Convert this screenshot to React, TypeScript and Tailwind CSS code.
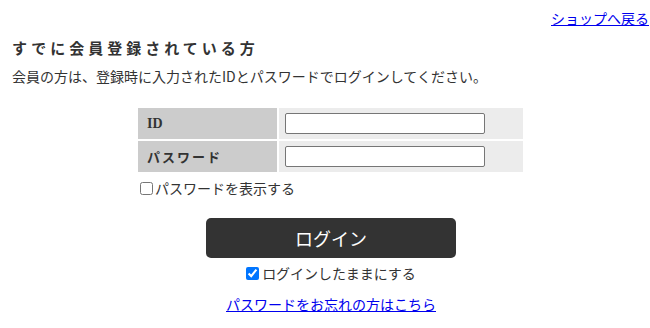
const FONT = "font-['Meiryo','Noto_Sans_CJK_JP',sans-serif]";

export default function App() {
  return (
    <div className={`w-[650px] h-[328px] bg-white text-[#333] text-[14px] ${FONT}`}>
      <div className="flex justify-end pt-[8px] pr-[1px] leading-[20px]">
        <a href="#" className="text-[#0000ee] underline text-[14px]">
          ショップへ戻る
        </a>
      </div>
      <div className="pl-[12px]">
        <h2 className="mt-[10px] font-bold text-[15px] tracking-[4px] leading-[20px]">
          すでに会員登録されている方
        </h2>
        <p className="mt-[8px] text-[14px] leading-[20px]">
          会員の方は、登録時に入力されたIDとパスワードでログインしてください。
        </p>

        <div className="mt-[22px] ml-[126px] w-[385px]">
          <div className="grid grid-cols-[139px_244px] gap-[2px]">
            <div className="bg-[#cccccc] h-[31px] flex items-center pl-[9px] font-bold text-[14px] font-['Liberation_Serif','Noto_Sans_CJK_JP',serif]">
              ID
            </div>
            <div className="bg-[#ececec] h-[31px] flex items-center pl-[6px]">
              <input className="w-[200px] h-[21px] bg-white border border-[#767676] rounded-[2px]" />
            </div>
            <div className="bg-[#cccccc] h-[31px] flex items-center pl-[9px] font-bold text-[13px] tracking-[2px]">
              パスワード
            </div>
            <div className="bg-[#ececec] h-[31px] flex items-center pl-[6px]">
              <input type="password" className="w-[200px] h-[21px] bg-white border border-[#767676] rounded-[2px]" />
            </div>
          </div>
          <label className="flex items-center mt-[6px] ml-[2px] text-[14px] leading-[20px]">
            <input type="checkbox" className="w-[13px] h-[13px] m-0 mr-[2px]" />
            パスワードを表示する
          </label>
        </div>

        <div className="flex flex-col items-center">
          <button className="mt-[20px] w-[250px] h-[40px] bg-[#333333] text-white text-[18px] rounded-[5px]">
            ログイン
          </button>
          <label className="flex items-center mt-[5px] text-[14px] leading-[20px]">
            <input type="checkbox" defaultChecked className="w-[13px] h-[13px] m-0 mr-[3px]" />
            ログインしたままにする
          </label>
          <a href="#" className="mt-[11px] text-[#0000ee] underline text-[14px] leading-[20px]">
            パスワードをお忘れの方はこちら
          </a>
        </div>
      </div>
    </div>
  );
}
